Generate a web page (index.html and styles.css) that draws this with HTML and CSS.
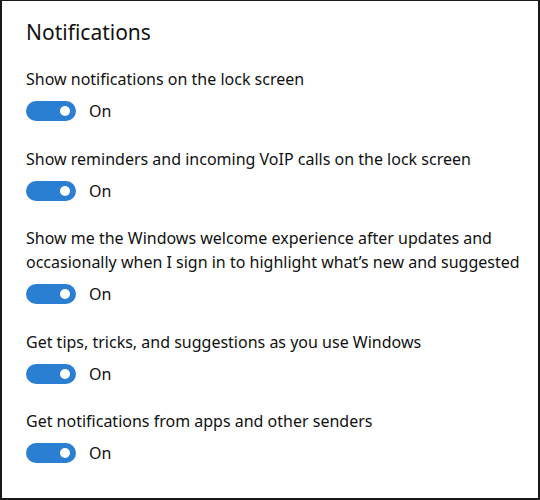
FILE: index.html
```html
<!DOCTYPE html>
<html>
<head>
<meta charset="utf-8">
<link rel="stylesheet" href="styles.css">
</head>
<body>
<div class="panel">
  <h1 class="title">Notifications</h1>
  <div class="setting">
    <div class="label">Show notifications on the lock screen</div>
    <div class="toggle-row"><span class="toggle"><span class="thumb"></span></span><span class="state">On</span></div>
  </div>
  <div class="setting">
    <div class="label">Show reminders and incoming VoIP calls on the lock screen</div>
    <div class="toggle-row"><span class="toggle"><span class="thumb"></span></span><span class="state">On</span></div>
  </div>
  <div class="setting">
    <div class="label">Show me the Windows welcome experience after updates and<br>occasionally when I sign in to highlight what’s new and suggested</div>
    <div class="toggle-row"><span class="toggle"><span class="thumb"></span></span><span class="state">On</span></div>
  </div>
  <div class="setting">
    <div class="label">Get tips, tricks, and suggestions as you use Windows</div>
    <div class="toggle-row"><span class="toggle"><span class="thumb"></span></span><span class="state">On</span></div>
  </div>
  <div class="setting">
    <div class="label">Get notifications from apps and other senders</div>
    <div class="toggle-row"><span class="toggle"><span class="thumb"></span></span><span class="state">On</span></div>
  </div>
</div>
</body>
</html>
```
FILE: styles.css
```css
html, body {
  margin: 0;
  padding: 0;
  background: #fff;
}
.panel {
  box-sizing: border-box;
  width: 540px;
  height: 500px;
  border: 2px solid #1a1a1a;
  border-top-width: 1px;
  padding: 15px 0 0 24px;
  font-family: "Noto Sans", "Open Sans", sans-serif;
  color: #111;
}
.title {
  margin: 0 0 25px 0;
  font-size: 21px;
  font-weight: 400;
  line-height: 32px;
  height: 26px;
}
.setting {
  display: flex;
  flex-direction: column;
  gap: 10px;
  margin-bottom: 25.5px;
}
.label {
  font-size: 16px;
  line-height: 24px;
}
.toggle-row {
  display: flex;
  align-items: center;
  gap: 13px;
  height: 20px;
}
.toggle {
  box-sizing: border-box;
  width: 50px;
  height: 20px;
  border-radius: 10px;
  background: #2a7fd2;
  display: flex;
  align-items: center;
  justify-content: flex-end;
  padding-right: 6px;
}
.thumb {
  width: 10px;
  height: 10px;
  border-radius: 50%;
  background: #fff;
}
.state {
  font-size: 16px;
  line-height: 20px;
}
```
